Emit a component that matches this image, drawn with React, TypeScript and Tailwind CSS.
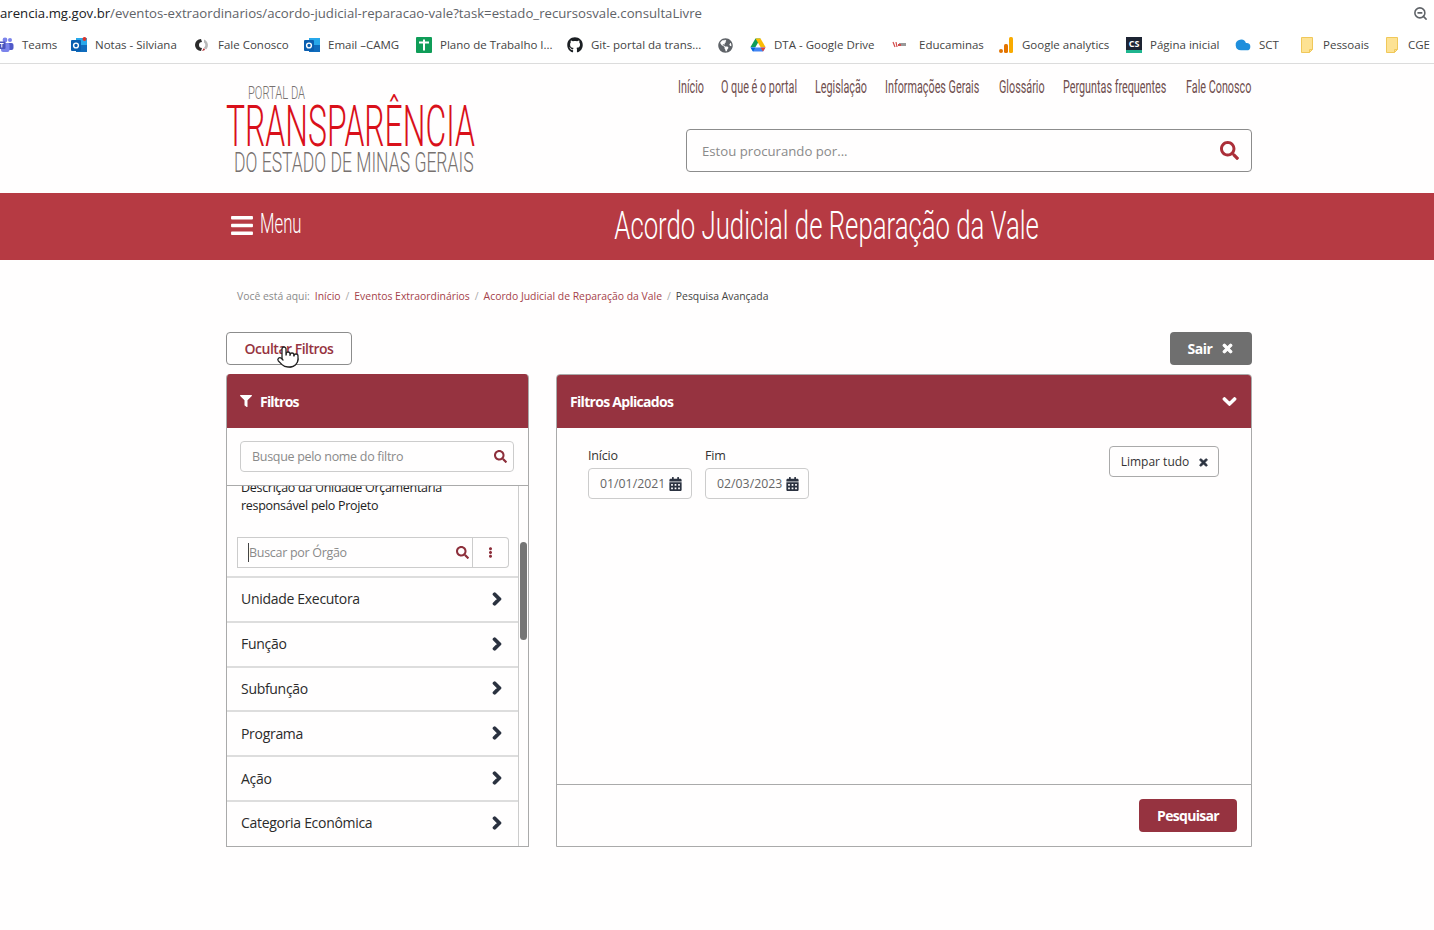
import { FaBars, FaCalendarAlt, FaChevronDown, FaChevronRight, FaEllipsisV, FaFilter, FaGithub, FaGlobeAmericas, FaSearch, FaTimes } from "react-icons/fa"
import { Cloud, Pointer, ZoomOut } from "lucide-react"
import type { ReactNode } from "react"

function OutlookIcon({ dot }: { dot?: boolean }) {
  return (
    <svg viewBox="0 0 16 16" className="h-4 w-4 shrink-0">
      <rect x="5" y="1" width="11" height="14" fill="#28a8ea" />
      <rect x="5" y="8" width="11" height="7" fill="#0f6cbd" />
      <rect x="0" y="3" width="10" height="11" rx="1" fill="#0a5fb0" />
      <circle cx="5" cy="8.5" r="2.4" fill="none" stroke="#fff" strokeWidth="1.4" />
      {dot && <circle cx="13.5" cy="2" r="2" fill="#d9342b" />}
    </svg>
  )
}

function TeamsIcon() {
  return (
    <svg viewBox="0 0 16 16" className="h-4 w-4 shrink-0">
      <circle cx="12" cy="3" r="2" fill="#7b83eb" />
      <rect x="9" y="6" width="6.5" height="7" rx="2" fill="#5059c9" />
      <circle cx="7" cy="3" r="2.4" fill="#7b83eb" />
      <rect x="3" y="6" width="8.5" height="9" rx="2" fill="#7b83eb" />
      <rect x="0" y="4.5" width="7.5" height="7.5" rx="1" fill="#4b53bc" />
      <path d="M2 6.5h3.6M3.8 6.5v4" stroke="#fff" strokeWidth="1" />
    </svg>
  )
}

function RingIcon() {
  return (
    <svg viewBox="0 0 16 16" className="h-4 w-4 shrink-0">
      <path d="M7 2a6 6 0 0 0 0 12l1-3a3 3 0 0 1 0-6z" fill="#2b2b2b" />
      <path d="M10 2.5a6 6 0 0 1 2 10l-2-2a3 3 0 0 0 0-5z" fill="#b8b8b8" />
      <path d="M8 14l3-1-1-2z" fill="#b32025" />
    </svg>
  )
}

function SheetIcon() {
  return (
    <svg viewBox="0 0 16 16" className="h-4 w-4 shrink-0">
      <rect x="0" y="0" width="16" height="16" rx="1" fill="#0f9d58" />
      <path d="M3 5.5h10M8 2.5v11" stroke="#fff" strokeWidth="2" />
    </svg>
  )
}

function DriveIcon() {
  return (
    <svg viewBox="0 0 16 16" className="h-4 w-4 shrink-0">
      <path d="M5.5 1.5h5l-5 8.5H0.5z" fill="#0f9d58" />
      <path d="M5.5 1.5h5l5 8.5h-5z" fill="#fbbc04" />
      <path d="M0.5 10.5h15l-2.5 4H3z" fill="#4285f4" />
      <path d="M0.5 10.5h5L3 14.5z" fill="#0066da" />
      <path d="M10.5 10.5h5l-2.5 4z" fill="#ea4335" />
    </svg>
  )
}

function EduIcon() {
  return (
    <svg viewBox="0 0 16 16" className="mr-[3px] h-4 w-4 shrink-0">
      <path d="M1 5l2 5M4 5l1 5" stroke="#d34b4b" strokeWidth="1.2" />
      <rect x="7" y="6" width="7" height="3" fill="#999" />
      <rect x="6" y="7" width="3" height="2" fill="#d34b4b" />
    </svg>
  )
}

function AnalyticsIcon() {
  return (
    <svg viewBox="0 0 16 16" className="h-4 w-4 shrink-0">
      <rect x="11" y="0" width="4" height="16" rx="1.5" fill="#f9ab00" />
      <rect x="6" y="7" width="4" height="9" rx="1.5" fill="#e37400" />
      <circle cx="3" cy="14" r="2" fill="#e37400" />
    </svg>
  )
}

function CsIcon() {
  return (
    <span className="flex h-4 w-4 shrink-0 flex-col bg-[#1d2433]">
      <span className="flex-1 text-center text-[9px] leading-[13px] font-bold text-white">CS</span>
      <span className="h-[3px] bg-[#1fb58f]" />
    </span>
  )
}

function NoteFolder() {
  return (
    <svg viewBox="0 0 16 16" className="h-4 w-4 shrink-0">
      <path d="M2.5 .5h11v12l-3 3h-8z" fill="#fde293" stroke="#f0c85a" />
      <path d="M13.5 12.5h-3v3" fill="none" stroke="#f0c85a" />
    </svg>
  )
}

const bookmarks: { label: string; icon: ReactNode; box: string }[] = [
  { label: "Teams", box: "-ml-[2px] w-[73px]", icon: <TeamsIcon /> },
  { label: "Notas - Silviana", box: "w-[123px]", icon: <OutlookIcon dot /> },
  { label: "Fale Conosco", box: "w-[110px]", icon: <RingIcon /> },
  { label: "Email –CAMG", box: "w-[112px]", icon: <OutlookIcon /> },
  { label: "Plano de Trabalho I...", box: "w-[151px]", icon: <SheetIcon /> },
  { label: "Git- portal da trans...", box: "w-[151px]", icon: <FaGithub className="h-4 w-4 shrink-0 text-[#1b1f23]" /> },
  { label: "", box: "w-[32px]", icon: <FaGlobeAmericas className="h-[15px] w-[15px] shrink-0 text-[#5f6368]" /> },
  { label: "DTA - Google Drive", box: "w-[142px]", icon: <DriveIcon /> },
  { label: "Educaminas", box: "w-[106px]", icon: <EduIcon /> },
  { label: "Google analytics", box: "w-[128px]", icon: <AnalyticsIcon /> },
  { label: "Página inicial", box: "w-[109px]", icon: <CsIcon /> },
  { label: "SCT", box: "w-[64px]", icon: <Cloud className="h-4 w-4 shrink-0 fill-[#1f8fdc] text-[#1f8fdc]" /> },
  { label: "Pessoais", box: "w-[85px]", icon: <NoteFolder /> },
  { label: "CGE", box: "w-[50px]", icon: <NoteFolder /> },
]

const navLinks = [
  { label: "Início", box: "w-[44px]" },
  { label: "O que é o portal", box: "w-[94px]" },
  { label: "Legislação", box: "w-[70px]" },
  { label: "Informações Gerais", box: "w-[114px]" },
  { label: "Glossário", box: "w-[64px]" },
  { label: "Perguntas frequentes", box: "w-[123px]" },
  { label: "Fale Conosco", box: "w-[66px]" },
]

const filterRows = ["Unidade Executora", "Função", "Subfunção", "Programa", "Ação", "Categoria Econômica"]

function DateField({ label, value }: { label: string; value: string }) {
  return (
    <div className="w-[104px]">
      <p className="pt-[1px] text-[12.5px] leading-4 tracking-[-0.2px] text-[#333]">{label}</p>
      <div className="mt-[4px] flex h-[31px] items-center justify-between rounded border border-[#ccc] pr-[9px] pl-[11px] text-[12.3px] text-[#666]">
        <span className="pt-[2px]">{value}</span>
        <FaCalendarAlt className="h-[14px] w-[13px] text-[#2b3240]" />
      </div>
    </div>
  )
}

export default function App() {
  return (
    <div className="h-[930px] overflow-hidden bg-[#fffefe] font-['Open_Sans','Noto_Sans',sans-serif]">
      {/* barra do navegador */}
      <div className="h-[64px] border-b border-[#dcdcdc] bg-white">
        <div className="flex h-[27px] items-center justify-between pr-[6px]">
          <p className="text-[13.2px] whitespace-nowrap text-[#5f6368]">
            <span className="text-[#202124]">arencia.mg.gov.br</span>/eventos-extraordinarios/acordo-judicial-reparacao-vale?task=estado_recursosvale.consultaLivre
          </p>
          <ZoomOut className="h-[15px] w-[15px] text-[#5f6368]" strokeWidth={2.5} />
        </div>
        <div className="flex h-[36px] items-center overflow-hidden">
          {bookmarks.map((b, i) => (
            <div key={i} className={`${b.box} flex shrink-0 items-center gap-2 text-[11.5px] whitespace-nowrap text-[#444]`}>
              {b.icon}
              {b.label && <span>{b.label}</span>}
            </div>
          ))}
        </div>
      </div>

      {/* cabeçalho */}
      <header className="ml-[226px] flex h-[129px] w-[1026px] justify-between">
        <div className="w-[250px] pt-[19px] font-['Roboto',sans-serif] font-light whitespace-nowrap">
          <p className="ml-[22px] h-[19px] origin-left scale-x-[.62] text-[18px] leading-[19px] text-[#77716f]">PORTAL DA</p>
          <p className="mt-[2px] h-[45px] origin-left scale-x-[.56] text-[57px] leading-[45px] text-[#d9101a]">TRANSPARÊNCIA</p>
          <p className="mt-[3px] ml-[8px] h-[22px] origin-left scale-x-[.65] text-[27px] leading-[22px] text-[#77716f]">DO ESTADO DE MINAS GERAIS</p>
        </div>
        <div className="w-[566px]">
          <nav className="flex h-[65px] items-start justify-end pt-[13px] font-['Roboto',sans-serif] text-[18px] leading-[20px] text-[#6f4e4e]">
            {navLinks.map((l) => (
              <a key={l.label} className={`${l.box} block whitespace-nowrap`}>
                <span className="inline-block origin-left scale-x-[.6]">{l.label}</span>
              </a>
            ))}
          </nav>
          <div className="flex h-[43px] items-center justify-between rounded border border-[#8c8c8c] pr-[12px] pl-[15px] text-[13.2px] text-[#8a8a8a]">
            <span className="pt-[2px]">Estou procurando por...</span>
            <FaSearch className="h-[19px] w-[19px] text-[#ab2e38]" />
          </div>
        </div>
      </header>

      {/* faixa vermelha */}
      <div className="h-[67px] bg-[#b63a43]">
        <div className="ml-[226px] flex h-full w-[1026px] items-center text-white">
          <div className="flex w-[176px] items-center pl-[3px]">
            <FaBars className="mt-[-3px] h-[25px] w-[26px] text-white" />
            <span className="mt-[-4px] ml-[5px] origin-left scale-x-[.62] font-['Roboto',sans-serif] text-[27px] font-light">Menu</span>
          </div>
          <h1 className="flex-1 text-center font-['Roboto',sans-serif] text-[39px] font-light whitespace-nowrap">
            <span className="inline-block scale-x-[.66]">Acordo Judicial de Reparação da Vale</span>
          </h1>
        </div>
      </div>

      {/* trilha */}
      <div className="ml-[226px] flex h-[72px] w-[1026px] items-center pt-[1px] pl-[11px] text-[10.4px] whitespace-nowrap">
        <span className="mr-[5px] text-[#8a8a8a]">Você está aqui:</span>
        <a className="text-[#a5424a]">Início</a>
        <span className="mx-[5px] text-[#aaa]">/</span>
        <a className="text-[#a5424a]">Eventos Extraordinários</a>
        <span className="mx-[5px] text-[#aaa]">/</span>
        <a className="text-[#a5424a]">Acordo Judicial de Reparação da Vale</a>
        <span className="mx-[5px] text-[#aaa]">/</span>
        <span className="text-[#444]">Pesquisa Avançada</span>
      </div>

      <main className="ml-[226px] w-[1026px]">
        <div className="flex h-[42px] items-start justify-between">
          <div className="relative">
            <button className="h-[33px] w-[126px] rounded border border-[#8c8c8c] text-[14px] font-semibold tracking-[-0.5px] text-[#963340]">Ocultar Filtros</button>
            <Pointer className="absolute top-[12px] left-[50px] h-[26px] w-[24px] fill-white text-[#222]" strokeWidth={1.3} />
          </div>
          <button className="flex h-[33px] w-[82px] items-center justify-center gap-[9px] rounded bg-[#6f6f6f] text-[14px] font-bold tracking-[-0.5px] text-white">
            Sair
            <FaTimes className="h-[13px] w-[13px] [stroke-width:40]" />
          </button>
        </div>

        <div className="flex h-[473px] justify-between">
          {/* painel de filtros */}
          <section className="flex w-[303px] flex-col overflow-hidden rounded-t border-x border-b border-[#aaa]">
            <div className="flex h-[54px] shrink-0 items-center gap-[8px] bg-[#963340] pl-[13px] text-[14px] font-bold tracking-[-0.8px] text-white">
              <FaFilter className="h-[12px] w-[12px]" />
              Filtros
            </div>
            <div className="h-[58px] shrink-0 border-b border-[#aaa] pt-[13px] pr-[14px] pl-[13px]">
              <div className="flex h-[31px] items-center justify-between rounded border border-[#ccc] pr-[6px] pl-[11px] text-[12.5px] tracking-[-0.3px] text-[#8a8a8a]">
                <span className="pt-[2px]">Busque pelo nome do filtro</span>
                <FaSearch className="h-[13px] w-[13px] text-[#8d2f3b]" />
              </div>
            </div>
            <div className="relative min-h-0 flex-1 overflow-hidden">
              <div className="mr-[9px] h-full overflow-hidden border-r border-[#ccc]">
                <p className="mt-[-7px] pl-[14px] text-[12.5px] leading-[18px] tracking-[-0.3px] text-[#222]">
                  Descrição da Unidade Orçamentária
                  <br />
                  responsável pelo Projeto
                </p>
                <div className="mt-[22px] ml-[10px] flex h-[31px] w-[272px]">
                  <div className="flex flex-1 items-center justify-between border border-[#ccc] pr-[3px] pl-[10px] text-[12.5px] tracking-[-0.3px] text-[#8a8a8a]">
                    <span className="border-l border-[#444] pt-[1px]">Buscar por Órgão</span>
                    <FaSearch className="h-[13px] w-[13px] text-[#8d2f3b]" />
                  </div>
                  <div className="flex w-[36px] items-center justify-center rounded-r border-y border-r border-[#ccc]">
                    <FaEllipsisV className="h-[11px] w-[11px] text-[#8d2f3b]" />
                  </div>
                </div>
                <div className="mt-[8px]">
                  {filterRows.map((row) => (
                    <div key={row} className="flex h-[44.8px] items-center justify-between border-t-2 border-[#ddd] pr-[15px] pb-[1px] pl-[14px] text-[14px] tracking-[-0.3px] text-[#2b2b2b]">
                      {row}
                      <FaChevronRight className="h-[14px] w-[12px] text-[#2b3240] [stroke-width:60]" />
                    </div>
                  ))}
                </div>
              </div>
              <div className="absolute top-[56px] right-[1px] h-[98px] w-[7px] rounded-full bg-[#757575]" />
            </div>
          </section>

          {/* filtros aplicados */}
          <section className="flex w-[696px] flex-col overflow-hidden rounded-t border border-[#aaa]">
            <div className="flex h-[53px] shrink-0 items-center justify-between bg-[#963340] pr-[14px] pl-[13px] text-[14px] font-bold tracking-[-0.7px] text-white">
              Filtros Aplicados
              <FaChevronDown className="h-[15px] w-[15px] [stroke-width:40]" />
            </div>
            <div className="flex flex-1 items-start justify-between pt-[19px] pr-[32px] pl-[31px]">
              <div className="flex gap-[13px]">
                <DateField label="Início" value="01/01/2021" />
                <DateField label="Fim" value="02/03/2023" />
              </div>
              <button className="mt-[-1px] flex h-[31px] w-[110px] items-center justify-center gap-[9px] rounded border border-[#aaa] pt-[1px] pl-[2px] text-[12px] text-[#333]">
                Limpar tudo
                <FaTimes className="h-[11px] w-[11px] text-[#2b3240] [stroke-width:40]" />
              </button>
            </div>
            <div className="flex h-[62px] shrink-0 items-start justify-end border-t border-[#aaa] pt-[14px] pr-[14px]">
              <button className="h-[33px] w-[98px] rounded bg-[#963340] text-[14px] font-bold tracking-[-0.7px] text-white">Pesquisar</button>
            </div>
          </section>
        </div>
      </main>
    </div>
  )
}
